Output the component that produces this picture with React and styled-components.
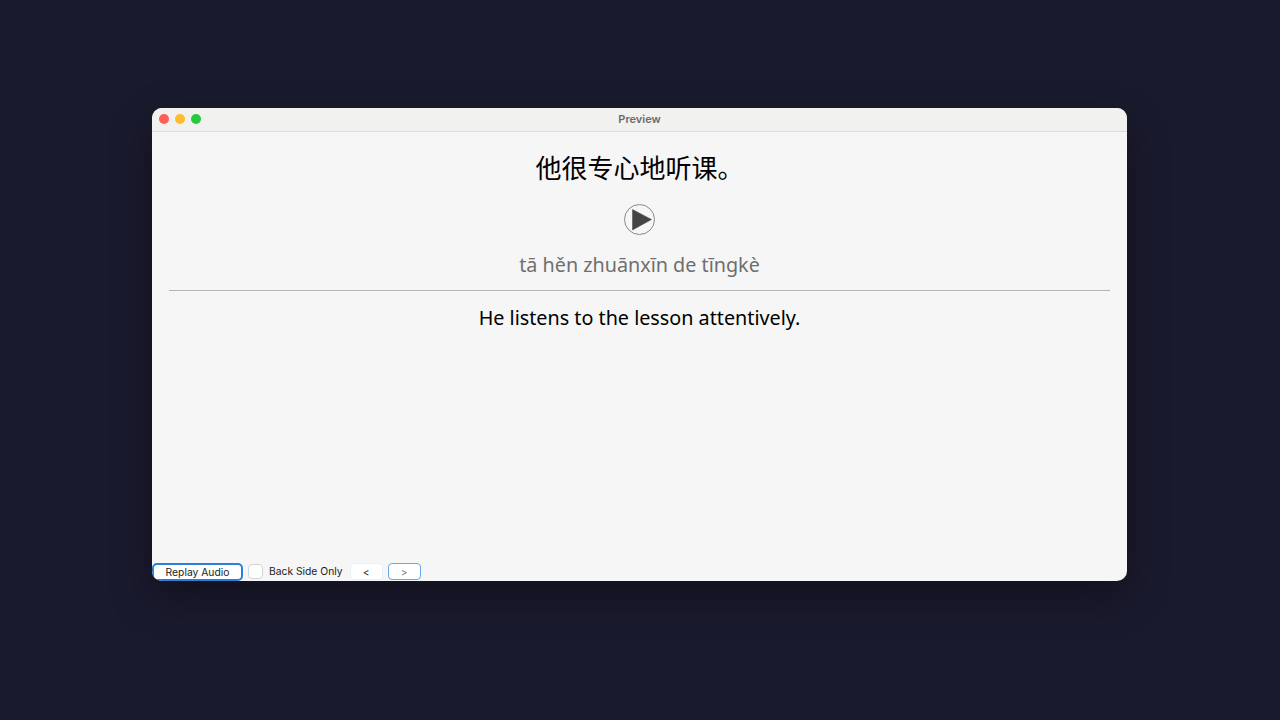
import React from 'react';
import styled, { createGlobalStyle } from 'styled-components';

const GlobalStyle = createGlobalStyle`
    html, body, #root {
        margin: 0;
        height: 100%;
    }
    body {
        background: #1a1a2e;
        font-family: "Noto Sans", sans-serif;
    }
`;

const Desktop = styled.div`
    height: 720px;
    padding: 108px 153px 139px 152px;
    box-sizing: border-box;
    display: flex;
`;

const Window = styled.div`
    flex: 1;
    display: flex;
    flex-direction: column;
    background: #f6f6f6;
    border-radius: 10px;
    overflow: hidden;
    box-shadow: 0 16px 40px rgba(0, 0, 0, 0.35);
`;

const TitleBar = styled.div`
    position: relative;
    height: 21px;
    padding-bottom: 2px;
    flex: none;
    display: flex;
    align-items: center;
    justify-content: center;
    background: #f1f1ef;
    border-bottom: 1px solid #dcdcda;
`;

const Lights = styled.div`
    position: absolute;
    left: 7px;
    top: 6px;
    display: flex;
    gap: 6px;
`;

const Light = styled.span`
    width: 10px;
    height: 10px;
    border-radius: 50%;
    background: ${(p) => p.$color};
`;

const Title = styled.span`
    font-family: "Inter", sans-serif;
    font-size: 11px;
    font-weight: 600;
    color: #6a6a6a;
`;

const Card = styled.div`
    flex: 1;
    display: flex;
    flex-direction: column;
    align-items: center;
    padding: 0 17px 0 17px;
`;

const Hanzi = styled.div`
    margin-top: 16px;
    height: 38px;
    line-height: 38px;
    font-family: "Noto Sans CJK SC", sans-serif;
    font-size: 26px;
    color: #000;
`;

const PlayButton = styled.svg`
    display: block;
    margin-top: 18px;
    width: 31px;
    height: 31px;
`;

const Pinyin = styled.div`
    margin-top: 15px;
    height: 30px;
    line-height: 30px;
    font-size: 19.75px;
    color: #6f6f6f;
`;

const Divider = styled.hr`
    align-self: stretch;
    margin: 10px 0 0;
    border: 0;
    border-top: 1px solid #b4b4b4;
`;

const Meaning = styled.div`
    margin-top: 12px;
    height: 30px;
    line-height: 30px;
    font-size: 19.75px;
    color: #000;
`;

const Controls = styled.div`
    height: 19px;
    flex: none;
    display: flex;
    align-items: center;
    font-family: "Inter", sans-serif;
    font-size: 10.3px;
    color: #1c1c1c;
`;

const Button = styled.button`
    box-sizing: border-box;
    height: ${(p) => (p.$primary ? '18px' : '17px')};
    width: ${(p) => p.$width}px;
    margin-right: ${(p) => p.$gap || 0}px;
    padding: 0;
    background: #fff;
    border-style: solid;
    border-width: ${(p) => (p.$primary ? '2px' : '1px')};
    border-color: ${(p) => (p.$primary ? '#2b7fdc' : p.$focused ? '#6aa9e8' : '#efefef')};
    border-radius: ${(p) => (p.$primary ? '5px' : '4px')};
    font-family: inherit;
    font-size: 10.3px;
    color: ${(p) => (p.$focused ? '#777' : '#1c1c1c')};
`;

const CheckLabel = styled.label`
    display: flex;
    align-items: center;
    gap: 6px;
    margin-right: 7px;
`;

const CheckBox = styled.span`
    box-sizing: border-box;
    width: 15px;
    height: 15px;
    background: #fff;
    border: 1px solid #d4d4d4;
    border-radius: 4px;
`;

const CheckText = styled.span`
    padding-bottom: 1px;
`;

const App = () => {
    return (
        <>
            <GlobalStyle />
            <Desktop>
                <Window>
                    <TitleBar>
                        <Lights>
                            <Light $color="#fe5f57" />
                            <Light $color="#febc2e" />
                            <Light $color="#28c840" />
                        </Lights>
                        <Title>Preview</Title>
                    </TitleBar>

                    <Card>
                        <Hanzi>他很专心地听课。</Hanzi>
                        <PlayButton viewBox="0 0 31 31">
                            <circle cx="15.5" cy="15.5" r="15" fill="#f6f6f6" stroke="#888" strokeWidth="1" />
                            <path d="M8.5 5.5 L27.5 15.5 L8.5 26 Z" fill="#444" stroke="#444" strokeWidth="0.5" strokeLinejoin="round" />
                        </PlayButton>
                        <Pinyin>tā hěn zhuānxīn de tīngkè</Pinyin>
                        <Divider />
                        <Meaning>He listens to the lesson attentively.</Meaning>
                    </Card>

                    <Controls>
                        <Button $primary $width={91} $gap={5}>Replay Audio</Button>
                        <CheckLabel>
                            <CheckBox />
                            <CheckText>Back Side Only</CheckText>
                        </CheckLabel>
                        <Button $width={33} $gap={5}>&lt;</Button>
                        <Button $focused $width={33}>&gt;</Button>
                    </Controls>
                </Window>
            </Desktop>
        </>
    );
};

export default App;
